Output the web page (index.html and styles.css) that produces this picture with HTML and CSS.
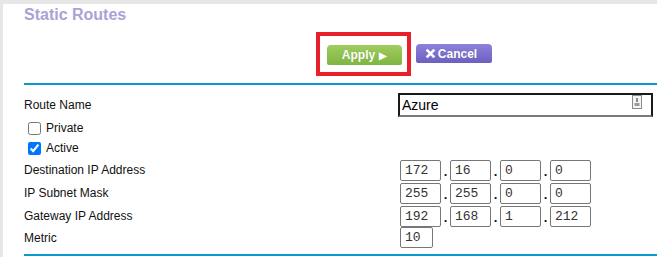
FILE: index.html
```html
<!DOCTYPE html>
<html lang="en">
<head>
  <meta charset="UTF-8">
  <title>Static Routes</title>
  <link rel="stylesheet" href="styles.css">
</head>
<body>
  <div class="page">
    <h1 class="title">Static Routes</h1>

    <div class="actions">
      <span class="highlight">
        <button class="btn btn-apply" type="button">Apply <span class="arrow">&#9654;</span></button>
      </span>
      <button class="btn btn-cancel" type="button">
        <svg width="11" height="11" viewBox="0 0 10 10"><path d="M1.5 1.5 L8.5 8.5 M8.5 1.5 L1.5 8.5" stroke="#fff" stroke-width="2.4" fill="none"/></svg>Cancel
      </button>
    </div>

    <div class="rule"></div>

    <form class="route-form">
      <div class="row row-name">
        <label>Route Name</label>
        <div class="name-wrap">
          <input class="name-input" type="text" value="Azure">
          <svg class="field-icon" width="10" height="14" viewBox="0 0 10 14">
            <rect x="0.5" y="0.5" width="9" height="13" fill="#f4f4f4" stroke="#8a8a8a"/>
            <rect x="4" y="3" width="2" height="4" fill="#8a8a8a"/>
            <rect x="2.5" y="8" width="5" height="3" fill="#9a9a9a"/>
          </svg>
        </div>
      </div>

      <label class="check"><input type="checkbox"> Private</label>
      <label class="check"><input type="checkbox" checked> Active</label>

      <div class="row row-ip">
        <label>Destination IP Address</label>
        <div class="ip">
          <input class="box" type="text" value="172"><span class="dot">.</span><input class="box" type="text" value="16"><span class="dot">.</span><input class="box" type="text" value="0"><span class="dot">.</span><input class="box" type="text" value="0">
        </div>
      </div>
      <div class="row row-ip">
        <label>IP Subnet Mask</label>
        <div class="ip">
          <input class="box" type="text" value="255"><span class="dot">.</span><input class="box" type="text" value="255"><span class="dot">.</span><input class="box" type="text" value="0"><span class="dot">.</span><input class="box" type="text" value="0">
        </div>
      </div>
      <div class="row row-ip">
        <label>Gateway IP Address</label>
        <div class="ip">
          <input class="box" type="text" value="192"><span class="dot">.</span><input class="box" type="text" value="168"><span class="dot">.</span><input class="box" type="text" value="1"><span class="dot">.</span><input class="box" type="text" value="212">
        </div>
      </div>
      <div class="row row-ip">
        <label>Metric</label>
        <div class="ip">
          <input class="box box-metric" type="text" value="10">
        </div>
      </div>
    </form>

    <div class="rule rule-bottom"></div>
  </div>
</body>
</html>
```

FILE: styles.css
```css
body { margin: 0; background: #e6e6e6; font-family: "Liberation Sans", Arial, sans-serif; color: #111; }
.page { margin: 4px 0 0 3px; background: #fff; padding-left: 21px; height: 253px; overflow: hidden; }
.title { margin: 0; padding-top: 1px; height: 19px; font-size: 16px; line-height: 19px; font-weight: bold; color: #aaa2d6; }

.actions { display: flex; align-items: center; padding: 8px 0 7px 292px; height: 44px; }
.highlight { display: flex; box-sizing: border-box; width: 95px; height: 44px; border: 4px solid #e8202a; padding: 9px 0 0 7px; }
.btn { display: flex; align-items: center; justify-content: center; height: 20px; border: none; border-radius: 4px 4px 2px 2px; color: #fff; font-family: "Liberation Sans", Arial, sans-serif; font-size: 12px; font-weight: bold; padding: 0; cursor: pointer; text-shadow: 0 0 1px rgba(0,0,0,0.15); }
.btn-apply { width: 75px; background: linear-gradient(#a0cd60, #7fb540); }
.btn-apply .arrow { font-size: 10px; margin-left: 4px; }
.btn-cancel { width: 76px; height: 19px; margin: -1px 0 0 5px; background: linear-gradient(#8c82dc, #6c60bf); gap: 2px; padding-right: 6px; }

.rule { height: 2px; background: #0b9acd; }
.route-form { padding-top: 8px; font-size: 12px; }

.row { display: grid; grid-template-columns: 375px auto; align-items: center; }
.row-name { height: 24px; margin-bottom: 1px; }
.name-wrap { position: relative; width: 255px; margin-left: -1px; }
.name-input { box-sizing: border-box; width: 255px; height: 24px; margin: 0; border: 2px solid #1a1a1a; border-bottom-color: #7a7a7a; padding: 0 0 0 2px; font-family: "Liberation Sans", Arial, sans-serif; font-size: 14px; color: #000; outline: none; }
.field-icon { position: absolute; right: 11px; top: 2px; }

.check { display: flex; align-items: center; height: 20px; }
.check input { margin: 0 5px 0 4px; width: 13px; height: 13px; }

.row-ip { height: 21px; margin-bottom: 2px; }
.ip { display: flex; align-items: center; margin-left: 1px; }
.box { box-sizing: border-box; width: 41px; height: 21px; margin: 0; border: 1px solid #777; border-radius: 2px; padding: 0 4px; font-family: "Liberation Mono", "Courier New", monospace; font-size: 13px; color: #333; outline: none; }
.box-metric { width: 33px; }
.dot { width: 9px; text-align: center; font-size: 13px; font-weight: bold; line-height: 21px; padding-top: 3px; }

.rule-bottom { margin-top: 6px; }
```
